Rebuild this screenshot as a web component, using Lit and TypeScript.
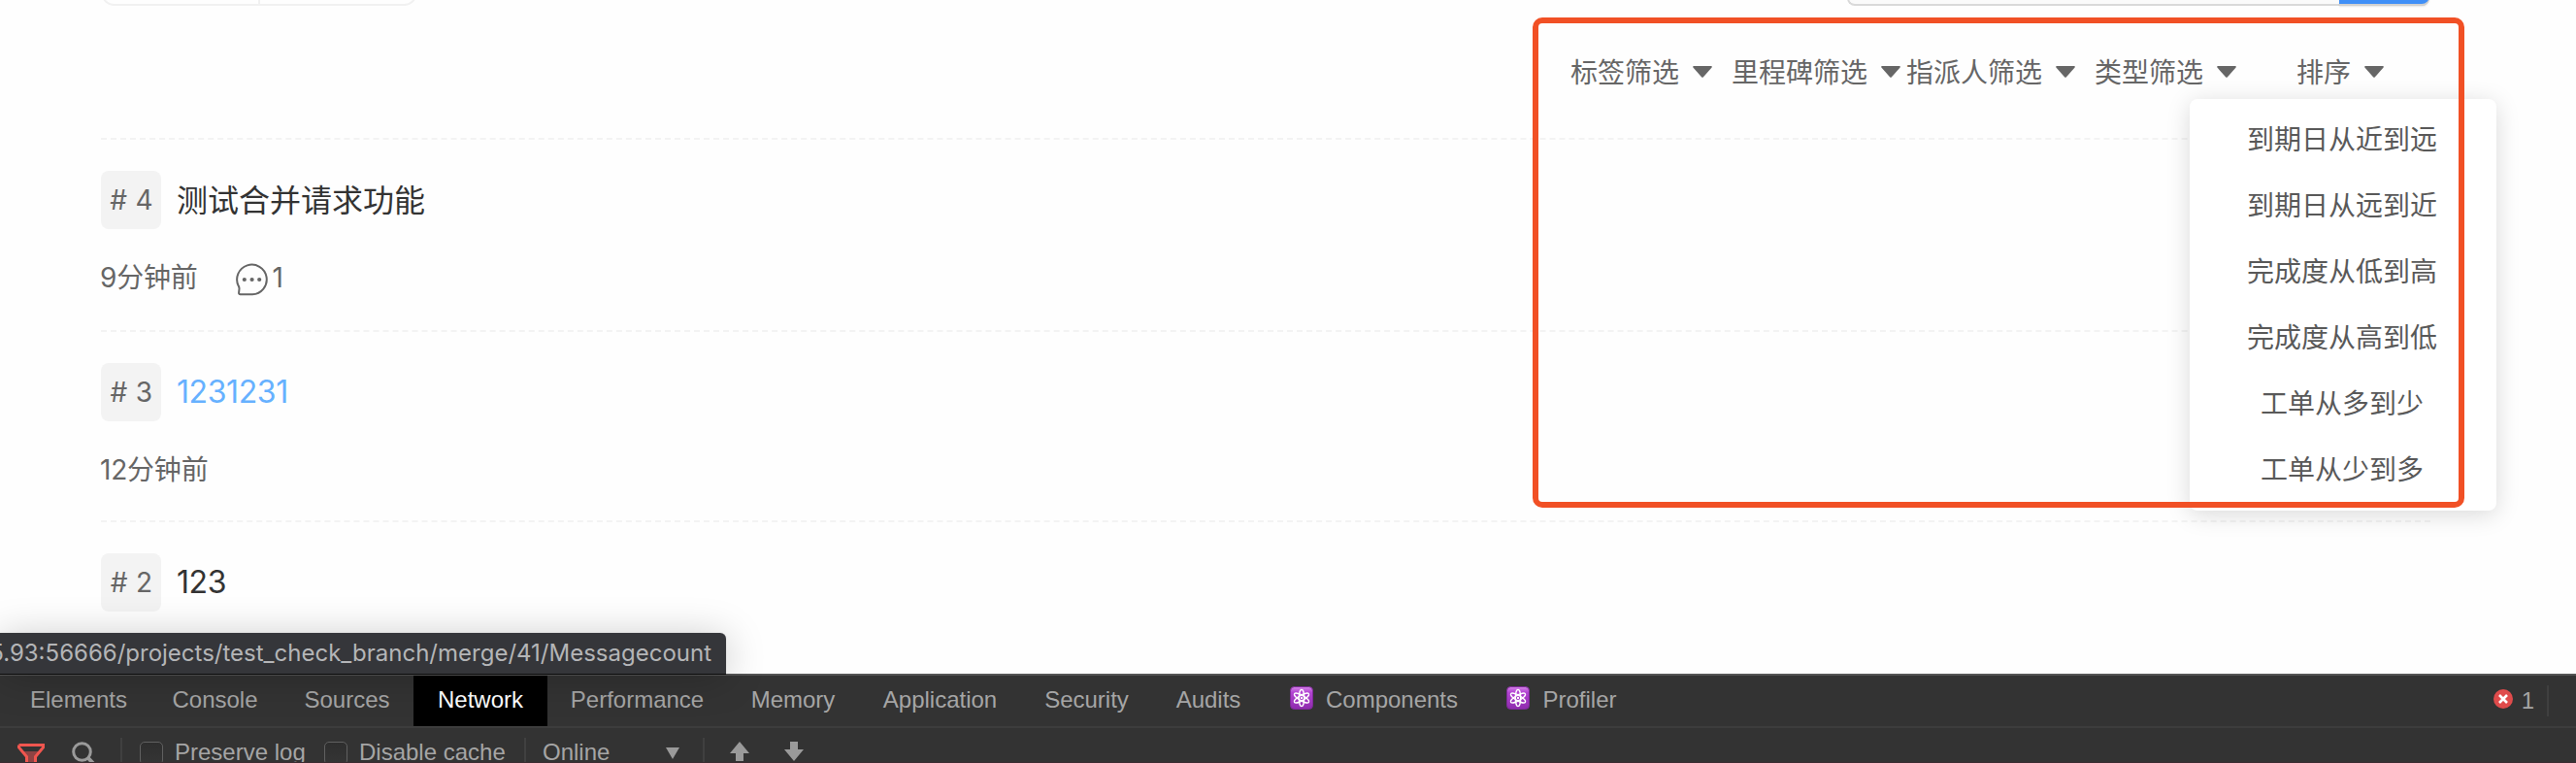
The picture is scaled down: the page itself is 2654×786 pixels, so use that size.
// Issue list with sort menu, docked above the devtools panel
import { LitElement, html, css, svg, nothing } from "lit";
import { customElement, property } from "lit/decorators.js";
import { classMap } from "lit/directives/class-map.js";

interface Issue {
  id: number;
  title: string;
  time: string;
  comments?: number;
  hover?: boolean;
}

interface Tab {
  label: string;
  width: number;
  atom?: boolean;
}

const FILTERS = ["标签筛选", "里程碑筛选", "指派人筛选", "类型筛选", "排序"];

const SORTS = [
  "到期日从近到远",
  "到期日从远到近",
  "完成度从低到高",
  "完成度从高到低",
  "工单从多到少",
  "工单从少到多",
];

const ISSUES: Issue[] = [
  { id: 4, title: "测试合并请求功能", time: "9分钟前", comments: 1 },
  { id: 3, title: "1231231", time: "12分钟前", hover: true },
  { id: 2, title: "123", time: "" },
];

const TABS: Tab[] = [
  { label: "Elements", width: 146 },
  { label: "Console", width: 135 },
  { label: "Sources", width: 137 },
  { label: "Network", width: 138 },
  { label: "Performance", width: 185 },
  { label: "Memory", width: 136 },
  { label: "Application", width: 167 },
  { label: "Security", width: 135 },
  { label: "Audits", width: 116 },
  { label: "Components", width: 225, atom: true },
  { label: "Profiler", width: 162, atom: true },
];

@customElement("issue-row")
export class IssueRow extends LitElement {
  @property({ type: Object }) issue!: Issue;

  static styles = css`
    :host {
      display: block;
      border-top: 2px dashed #f3f3f3;
      padding: 32px 0;
    }
    .head {
      display: flex;
      align-items: center;
      gap: 16px;
      height: 60px;
    }
    .badge {
      width: 62px;
      height: 60px;
      line-height: 60px;
      border-radius: 8px;
      background: #f3f3f3;
      color: #666;
      font-size: 28px;
      text-align: center;
      word-spacing: 2px;
      letter-spacing: -0.7px;
      white-space: nowrap;
    }
    .title {
      padding-top: 2px;
      font-size: 32px;
      line-height: 60px;
      color: #333;
    }
    .title.latin {
      padding-top: 0;
      letter-spacing: -0.4px;
    }
    .title.hover {
      color: #66b1ff;
    }
    .meta {
      display: flex;
      align-items: center;
      margin: 30px 0 0 -1px;
      height: 40px;
      font-size: 28px;
      line-height: 40px;
      color: #666;
      letter-spacing: -0.2px;
    }
    .meta.tall {
      height: 42px;
      align-items: flex-start;
    }
    .comments {
      display: flex;
      margin-left: 37px;
      gap: 4px;
    }
    .comments svg {
      margin-top: 4px;
    }
  `;

  render() {
    const { id, title, time, comments, hover } = this.issue;
    return html`
      <div class="head">
        <span class="badge"># ${id}</span>
        <span class=${classMap({ title: true, hover: !!hover, latin: /^\d+$/.test(title) })}>${title}</span>
      </div>
      <div class=${classMap({ meta: true, tall: !!comments })}>
        <span>${time}</span>
        ${comments
          ? html`<span class="comments">
              <svg width="36" height="36" viewBox="0 0 36 36" fill="none" stroke="#666" stroke-width="2">
                <path
                  d="M4.7 24.6 A15.3 15.3 0 1 1 19 33.2 H6.6 Q4.9 33.2 5.1 31.3 L5.5 27.5 Q5.6 26.2 4.7 24.6Z"
                  stroke-linejoin="round"
                />
                <g fill="#666" stroke="none">
                  <circle cx="10.8" cy="18" r="2.1" />
                  <circle cx="18.6" cy="18" r="2.1" />
                  <circle cx="26.2" cy="18" r="2.1" />
                </g>
              </svg>
              <span>${comments}</span>
            </span>`
          : nothing}
      </div>
    `;
  }
}

@customElement("devtools-panel")
export class DevtoolsPanel extends LitElement {
  static styles = css`
    :host {
      display: block;
      height: 92px;
      box-sizing: border-box;
      border-top: 2px solid #545454;
      background: #333;
      color: #a5a5a5;
      font: 24px/30px "Liberation Sans", Arial, sans-serif;
      overflow: hidden;
    }
    .tabs {
      display: flex;
      height: 52px;
      padding-left: 8px;
      border-bottom: 2px solid #3d3d3d;
    }
    .tab {
      display: flex;
      flex: none;
      align-items: center;
      justify-content: center;
      gap: 13px;
      box-sizing: border-box;
      padding-bottom: 2px;
      white-space: nowrap;
    }
    .tab svg {
      margin-bottom: 4px;
    }
    .tab.active {
      background: #000;
      color: #fff;
    }
    .errors {
      display: flex;
      align-items: center;
      margin-left: auto;
      margin-right: 28px;
      padding-right: 13px;
      height: 32px;
      margin-top: 10px;
      border-right: 2px solid #3f3f3f;
      gap: 9px;
    }
    .errors svg {
      margin-bottom: 4px;
    }
    .toolbar {
      display: flex;
      align-items: flex-start;
      height: 35px;
      padding-left: 18px;
      border-bottom: 1px solid #3b2c31;
      overflow: hidden;
    }
    .toolbar > * {
      flex: none;
    }
    .label {
      margin-top: 10px;
      white-space: nowrap;
    }
    .sep {
      width: 2px;
      height: 30px;
      margin-top: 10px;
      background: #404040;
    }
    .check {
      box-sizing: border-box;
      width: 24px;
      height: 24px;
      margin-top: 14px;
      border: 1.5px solid #606060;
      border-radius: 5px;
      background: linear-gradient(#2e2e2e, #353535);
    }
    .funnel {
      margin-top: 16px;
    }
    .search {
      margin: 14px 24px 0 28px;
    }
    .preserve {
      width: 154px;
      margin-left: 12px;
    }
    .cache {
      width: 170px;
      margin-left: 12px;
    }
    .first {
      margin-left: 18px;
    }
    .online {
      width: 127px;
      margin-left: 17px;
    }
    .caret {
      margin: 20px 24px 0 0;
    }
    .arrow {
      margin: 14px 0 0 26px;
    }
    .arrow.down {
      margin-left: 36px;
    }
  `;

  private _atom() {
    return svg`<svg width="24" height="24" viewBox="0 0 24 24">
      <defs>
        <linearGradient id="glow" x1="0" y1="0" x2="0" y2="1">
          <stop offset="0" stop-color="#d685e8" />
          <stop offset="0.25" stop-color="#b244d2" />
          <stop offset="1" stop-color="#8e2bad" />
        </linearGradient>
      </defs>
      <rect x="0.5" y="0.5" width="23" height="23" rx="4" fill="url(#glow)" stroke="#7e2a99" />
      <g fill="none" stroke="#fff" stroke-width="1.3">
        <ellipse cx="12" cy="12" rx="2.7" ry="8.6" />
        <ellipse cx="12" cy="12" rx="2.7" ry="8.6" transform="rotate(60 12 12)" />
        <ellipse cx="12" cy="12" rx="2.7" ry="8.6" transform="rotate(120 12 12)" />
      </g>
      <circle cx="12" cy="12" r="1.2" fill="#fff" />
    </svg>`;
  }

  render() {
    return html`
      <div class="tabs">
        ${TABS.map(
          (t) => html`<div
            class=${classMap({ tab: true, active: t.label === "Network" })}
            style="width: ${t.width}px"
          >
            ${t.atom ? this._atom() : nothing}<span>${t.label}</span>
          </div>`
        )}
        <div class="errors">
          <svg width="20" height="20" viewBox="0 0 20 20">
            <circle cx="10" cy="10" r="10" fill="#df4b4b" />
            <path d="M6 6 L14 14 M14 6 L6 14" stroke="#fff" stroke-width="2.6" />
          </svg>
          <span>1</span>
        </div>
      </div>
      <div class="toolbar">
        <svg class="funnel" width="28" height="24" viewBox="0 0 28 24">
          <path d="M5.5 8 H22.5 L18.5 14 V24 H9.5 V14Z" fill="#8f4343" />
          <path d="M1.5 1.5 H26.5 V4 L18.5 13.5 V24 M1.5 1.5 V4 L9.5 13.5 V24" fill="none" stroke="#f0564f" stroke-width="3" />
        </svg>
        <svg class="search" width="26" height="26" viewBox="0 0 26 26" fill="none" stroke="#9a9a9a" stroke-width="3">
          <circle cx="10.5" cy="10.5" r="8.8" />
          <path d="M16.5 16.5 L24 24.5" stroke-width="4" />
        </svg>
        <span class="sep"></span>
        <span class="check first"></span>
        <span class="label preserve">Preserve log</span>
        <span class="check"></span>
        <span class="label cache">Disable cache</span>
        <span class="sep"></span>
        <span class="label online">Online</span>
        <svg class="caret" width="14" height="12" viewBox="0 0 14 12">
          <path d="M0 0 H14 L7 12Z" fill="#9a9a9a" />
        </svg>
        <span class="sep"></span>
        <svg class="arrow" width="20" height="20" viewBox="0 0 20 20">
          <path d="M10 0 L20 12 H14 V20 H6 V12 H0Z" fill="#9a9a9a" />
        </svg>
        <svg class="arrow down" width="20" height="20" viewBox="0 0 20 20">
          <path d="M10 20 L20 8 H14 V0 H6 V8 H0Z" fill="#9a9a9a" />
        </svg>
      </div>
    `;
  }
}

@customElement("app-root")
export class AppRoot extends LitElement {
  static styles = css`
    :host {
      display: block;
      position: relative;
      width: 2654px;
      height: 786px;
      overflow: hidden;
      background: #fefefe;
      font-family: Inter, "Noto Sans CJK SC", sans-serif;
    }
    .page {
      box-sizing: border-box;
      height: 694px;
      padding: 0 150px 0 104px;
      overflow: hidden;
    }
    .top {
      display: flex;
      justify-content: space-between;
      align-items: flex-end;
      height: 6px;
    }
    .group {
      display: flex;
      box-sizing: border-box;
      width: 326px;
      height: 40px;
      border: 2px solid #f1f1f1;
      border-radius: 14px;
    }
    .group span {
      width: 160px;
      border-right: 2px solid #f1f1f1;
    }
    .find {
      display: flex;
      box-sizing: border-box;
      width: 600px;
      height: 60px;
      margin-right: 1px;
      border: 2px solid #d9d9d9;
      border-right: 0;
      border-radius: 8px;
      background: #fafafa;
    }
    .find span {
      width: 93px;
      margin-left: auto;
      border-radius: 0 0 8px 0;
      background: #3f8ff7;
      box-shadow: 0 2px 0 #d0d0d0, 0 3px 2px rgba(0, 0, 0, 0.1);
    }
    .filters {
      display: flex;
      justify-content: flex-end;
      align-items: center;
      height: 136px;
      box-sizing: border-box;
      padding: 0 48px 0 0;
    }
    .filter {
      display: flex;
      align-items: center;
      gap: 14px;
      margin-left: 20px;
      font-size: 28px;
      line-height: 40px;
      color: #666;
    }
    .filter span {
      padding-top: 2px;
    }
    .filter.tight {
      margin-left: 6px;
    }
    .filter.wide {
      margin-left: 62px;
    }
    .menu {
      position: absolute;
      left: 2256px;
      top: 102px;
      width: 316px;
      box-sizing: border-box;
      padding: 8px 2px 8px 0;
      border-radius: 8px;
      background: #fff;
      box-shadow: 0 4px 24px rgba(0, 0, 0, 0.15);
    }
    .menu div {
      height: 68px;
      line-height: 68px;
      font-size: 28px;
      text-align: center;
      color: #595959;
    }
    .marker {
      position: absolute;
      left: 1579px;
      top: 18px;
      width: 960px;
      height: 505px;
      box-sizing: border-box;
      border: 6px solid #f15025;
      border-radius: 10px;
    }
    .status {
      position: absolute;
      left: 0;
      top: 652px;
      width: 748px;
      height: 43px;
      box-sizing: border-box;
      display: flex;
      justify-content: flex-end;
      padding-right: 15px;
      border-bottom: 1px solid #0c0c0c;
      border-radius: 0 6px 0 0;
      background: #35363a;
      color: #b4b5b7;
      font-size: 24px;
      line-height: 42px;
      white-space: nowrap;
      overflow: hidden;
    }
    .shade {
      position: absolute;
      left: 0;
      top: 652px;
      width: 748px;
      height: 42px;
      border-radius: 0 6px 0 0;
      box-shadow: 0 0 1px rgba(0, 0, 0, 0.4), 0 4px 40px rgba(0, 0, 0, 0.22);
    }
  `;

  private _filter(label: string) {
    const cls = { filter: true, tight: label === "指派人筛选", wide: label === "排序" };
    return html`<div class=${classMap(cls)}>
      <span>${label}</span>
      <svg width="20" height="12" viewBox="0 0 20 12">
        <path d="M1.2 0 H18.8 Q20.6 0.2 19.4 1.8 L11 11.3 Q10 12.4 9 11.3 L0.6 1.8 Q-0.6 0.2 1.2 0Z" fill="#666" />
      </svg>
    </div>`;
  }

  render() {
    return html`
      <div class="page">
        <div class="top">
          <div class="group"><span></span></div>
          <div class="find"><span></span></div>
        </div>
        <div class="filters">${FILTERS.map((f) => this._filter(f))}</div>
        ${ISSUES.map((i) => html`<issue-row .issue=${i}></issue-row>`)}
      </div>
      <devtools-panel></devtools-panel>
      <div class="menu">${SORTS.map((s) => html`<div>${s}</div>`)}</div>
      <div class="marker"></div>
      <div class="shade"></div>
      <div class="status"><span>5.93:56666/projects/test_check_branch/merge/41/Messagecount</span></div>
    `;
  }
}
